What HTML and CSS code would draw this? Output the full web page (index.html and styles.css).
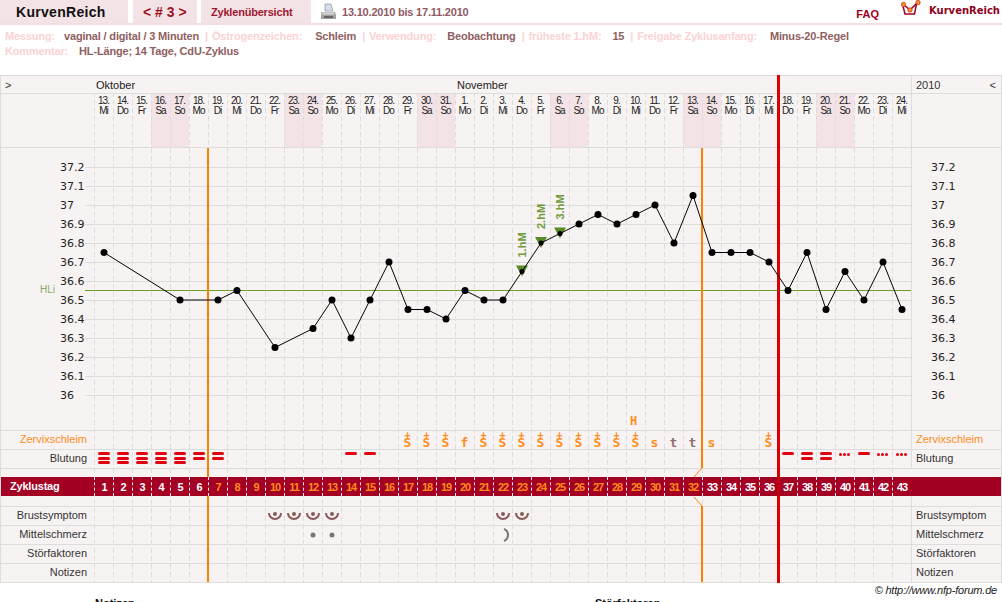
FILE: index.html
```html
<!DOCTYPE html>
<html lang="de">
<head>
    <meta charset="UTF-8">
    <title>KurvenReich</title>
    <link rel="stylesheet" href="styles.css">
</head>
<body>
    <header class="topbar">
        <div class="tab tab-brand">KurvenReich</div>
        <div class="tab tab-cycle">&lt; # 3 &gt;</div>
        <div class="tab tab-overview">Zyklenübersicht</div>
        <svg class="printer" width="16" height="18" viewBox="0 0 16 18">
            <path d="M5 1h6l2 7H5z" fill="#d5dde6" stroke="#8a949e" stroke-width="0.7"/>
            <path d="M1 9h14l1 3v4H1V12z" fill="#a3a3a3"/>
            <path d="M2 9.5h12l.5 2h-13z" fill="#d8d8d8"/>
            <rect x="4" y="13" width="9" height="2" fill="#666"/>
        </svg>
        <div class="date-range">13.10.2010 bis 17.11.2010</div>
        <a class="faq">FAQ</a>
        <svg class="logo-icon" width="20" height="17" viewBox="0 0 20 17">
            <path d="M2 6l2 8h9.500l2-10" fill="none" stroke="#a00020" stroke-width="1.500"/>
            <path d="M2 4l7 6 8-8" fill="none" stroke="#a00020" stroke-width="1.500"/>
            <circle cx="2.500" cy="4.500" r="2.200" fill="#f39a1e" stroke="#c8202a" stroke-width="0.700"/>
            <circle cx="9" cy="10" r="2.200" fill="#f39a1e" stroke="#c8202a" stroke-width="0.700"/>
            <circle cx="17" cy="2.500" r="2.200" fill="#f39a1e" stroke="#c8202a" stroke-width="0.700"/>
        </svg>
        <div class="logo-text">KurvenReich</div>
    </header>

    <section class="meta">
        <p>
            <span class="meta-label">Messung:</span>
            <span class="meta-value meta-value-tight">vaginal / digital / 3 Minuten</span>
            <span class="meta-sep">|</span>
            <span class="meta-label">Östrogenzeichen:</span>
            <span class="meta-value meta-value-loose">Schleim</span>
            <span class="meta-sep">|</span>
            <span class="meta-label">Verwendung:</span>
            <span class="meta-value">Beobachtung</span>
            <span class="meta-sep">|</span>
            <span class="meta-label">früheste 1.hM:</span>
            <span class="meta-value">15</span>
            <span class="meta-sep">|</span>
            <span class="meta-label">Freigabe Zyklusanfang:</span>
            <span class="meta-value meta-value-loose">Minus-20-Regel</span>
        </p>
        <p>
            <span class="meta-label">Kommentar:</span>
            <span class="meta-value">HL-Länge; 14 Tage, CdU-Zyklus</span>
        </p>
    </section>

    <main class="chart">
        <div class="row row-month">
            <div class="row-label toggle-left">&gt;</div>
            <div class="months">
                <span class="month month-oct">Oktober</span>
                <span class="month">November</span>
            </div>
            <div class="row-side year"><span>2010</span><span>&lt;</span></div>
        </div>
        <div class="row row-dates">
            <div class="row-label"></div>
            <div class="days" id="row-dates"></div>
            <div class="row-side"></div>
        </div>
        <div class="row row-plot">
            <div class="row-label"></div>
            <div class="days"></div>
            <div class="row-side"></div>
        </div>
        <div class="row">
            <div class="row-label label-mucus">Zervixschleim</div>
            <div class="days" id="row-mucus"></div>
            <div class="row-side label-mucus">Zervixschleim</div>
        </div>
        <div class="row">
            <div class="row-label">Blutung</div>
            <div class="days" id="row-bleeding"></div>
            <div class="row-side">Blutung</div>
        </div>
        <div class="row-gap"></div>
        <div class="row row-cycle">
            <div class="row-label">Zyklustag</div>
            <div class="days" id="row-cycle"></div>
            <div class="row-side"></div>
        </div>
        <div class="row row-gap-low">
            <div class="row-label"></div>
            <div class="days"></div>
            <div class="row-side"></div>
        </div>
        <div class="row">
            <div class="row-label">Brustsymptom</div>
            <div class="days" id="row-breast"></div>
            <div class="row-side">Brustsymptom</div>
        </div>
        <div class="row">
            <div class="row-label">Mittelschmerz</div>
            <div class="days" id="row-pain"></div>
            <div class="row-side">Mittelschmerz</div>
        </div>
        <div class="row">
            <div class="row-label">Störfaktoren</div>
            <div class="days"></div>
            <div class="row-side">Störfaktoren</div>
        </div>
        <div class="row">
            <div class="row-label">Notizen</div>
            <div class="days"></div>
            <div class="row-side">Notizen</div>
        </div>
        <svg class="overlay overlay-grid" id="overlay-grid" width="1002" height="508" viewBox="0 75 1002 508"></svg>
        <svg class="overlay overlay-curve" id="overlay-curve" width="1002" height="508" viewBox="0 75 1002 508"></svg>
    </main>

    <div class="copyright">© http://www.nfp-forum.de</div>
    <div class="notes">
        <h3>Notizen</h3>
        <h3>Störfaktoren</h3>
    </div>

    <script src="script.js"></script>
</body>
</html>
```

FILE: styles.css
```css
html, body {
    margin: 0;
    height: 602px;
    overflow: hidden;
    background: #fff;
}

body {
    font-family: "Liberation Sans", Arial, sans-serif;
    font-size: 11px;
    color: #333;
}

.topbar {
    display: flex;
    align-items: center;
    height: 23px;
    border-bottom: 2px solid #f3dfe2;
}

.tab {
    display: flex;
    align-items: center;
    align-self: stretch;
    background-color: #f3e3e6;
    font-weight: bold;
}

.tab-brand {
    width: 112px;
    padding-left: 16px;
    margin-right: 5px;
    font-size: 14px;
    letter-spacing: 0.3px;
    color: #111;
}

.tab-cycle {
    width: 54px;
    padding-left: 10px;
    margin-right: 4px;
    font-size: 14px;
    color: #a01025;
}

.tab-overview {
    width: 100px;
    padding-left: 10px;
    margin-right: 9px;
    letter-spacing: -0.2px;
    color: #a01830;
}

.date-range {
    margin-left: 6px;
    font-weight: bold;
    letter-spacing: -0.2px;
    color: #8f5a63;
}

.faq {
    margin-left: auto;
    margin-top: 4px;
    font-weight: bold;
    color: #a00020;
}

.logo-icon {
    margin-left: 22px;
    margin-bottom: 6px;
}

.logo-text {
    margin-left: 8px;
    margin-right: 2px;
    margin-bottom: 2px;
    font-family: "DejaVu Sans", sans-serif;
    font-size: 10px;
    font-weight: bold;
    color: #900020;
}

.meta {
    height: 50px;
    padding: 4px 0 0 5px;
    box-sizing: border-box;
    font-weight: bold;
    letter-spacing: -0.17px;
    color: #8f6060;
}

.meta p {
    display: flex;
    margin: 0;
    height: 15px;
    line-height: 15px;
    white-space: nowrap;
}

.meta-label,
.meta-sep {
    color: #fbd3d3;
}

.meta-sep {
    margin: 0 4px 0 6px;
}

.meta-value {
    margin-left: 11px;
}

.meta-value-tight {
    margin-left: 9px;
}

.meta-value-loose {
    margin-left: 13px;
}

.chart {
    position: relative;
    background-color: #f8f3f3;
    border-top: 1px solid #ddd;
}

.row {
    display: grid;
    grid-template-columns: 93px 817px 1fr;
    height: 19px;
    box-sizing: border-box;
    border: solid #ddd;
    border-width: 0 1px 1px;
}

.row-label {
    padding-right: 7px;
    line-height: 16px;
    text-align: right;
}

.row-side {
    padding-left: 4px;
    line-height: 16px;
    border-left: 1px solid #ddd;
}

.label-mucus {
    color: #ff8c1a;
}

.days {
    display: flex;
}

.day {
    display: flex;
    flex: 0 0 19px;
    flex-direction: column;
    align-items: center;
    box-sizing: border-box;
}

.row-month {
    height: 18px;
}

.row-month .row-label,
.row-month .row-side {
    line-height: 18px;
}

.toggle-left {
    padding: 0 0 0 4px;
    text-align: left;
}

.months {
    display: flex;
    line-height: 18px;
    color: #222;
}

.month {
    padding-left: 2px;
}

.month-oct {
    width: 359px;
}

.year {
    display: flex;
    justify-content: space-between;
    padding-right: 5px;
}

.row-dates {
    height: 54px;
}

.date {
    padding-top: 2px;
    font-size: 10px;
    line-height: 10px;
    letter-spacing: -1px;
    text-align: center;
    color: #222;
}

.weekend {
    background-color: #f3e3e6;
}

.row-plot {
    height: 283px;
}

.row-gap {
    height: 8px;
    border: solid #ddd;
    border-width: 0 1px;
}

.row-cycle {
    position: relative;
    z-index: 2;
    background-color: #a30023;
    background-clip: padding-box;
    border-bottom: 0;
    color: #fff;
    font-weight: bold;
}

.row-cycle .row-label {
    padding: 0 0 0 9px;
    line-height: 19px;
    letter-spacing: -0.2px;
    text-align: left;
}

.row-cycle .row-side {
    border-left: 0;
}

.cycle-day {
    justify-content: center;
    border-left: 1px dashed #f8f3f3;
    letter-spacing: -1px;
}

.cycle-day-fertile {
    color: #ff8c1a;
}

.row-gap-low {
    height: 11px;
}

.mucus {
    font-family: "DejaVu Sans Mono", monospace;
    font-size: 13px;
    font-weight: bold;
    line-height: 10px;
    color: #ff8c1a;
}

.mucus-plus {
    font-size: 10px;
    line-height: 7px;
}

.mucus-single {
    padding-top: 7px;
}

.mucus-dry {
    color: #8f6f6f;
}

.bleeding {
    gap: 1.5px;
    padding-top: 2px;
}

.bleed-bar {
    display: block;
    width: 12px;
    height: 3px;
    border-radius: 2px;
    background-color: #e00010;
}

.bleed-dots {
    display: flex;
    gap: 1px;
    padding-top: 1px;
}

.bleed-dot {
    width: 3px;
    height: 3px;
    border-radius: 50%;
    background-color: #e00010;
}

.symbol {
    justify-content: center;
}

.overlay {
    position: absolute;
    top: -1px;
    left: 0;
    pointer-events: none;
}

.overlay-grid {
    z-index: 1;
}

.overlay-curve {
    z-index: 3;
}

.axis-label {
    font-family: "DejaVu Sans", sans-serif;
    font-size: 11px;
    fill: #222;
}

.hl-label {
    font-size: 10px;
    fill: #86a868;
}

.hm-label {
    font-size: 11px;
    font-weight: bold;
    fill: #6f9a3c;
}

.peak-label {
    font-family: "DejaVu Sans Mono", monospace;
    font-size: 12px;
    font-weight: bold;
    fill: #ff8c1a;
}

.copyright {
    padding: 1px 5px 1px 0;
    text-align: right;
    font-style: italic;
    letter-spacing: -0.2px;
    color: #222;
}

.notes {
    display: grid;
    grid-template-columns: 500px 1fr;
    padding-left: 95px;
}

.notes h3 {
    margin: 0;
    font-size: 11px;
    color: #111;
}
```

FILE: script.js
```js
const dayCount = 43;
const weekdays = ['Mi', 'Do', 'Fr', 'Sa', 'So', 'Mo', 'Di'];

// temperature per cycle day, missing days are left out
const temps = {
    1: 36.75, 5: 36.5, 7: 36.5, 8: 36.55, 10: 36.25, 12: 36.35, 13: 36.5, 14: 36.3,
    15: 36.5, 16: 36.7, 17: 36.45, 18: 36.45, 19: 36.4, 20: 36.55, 21: 36.5, 22: 36.5,
    23: 36.65, 24: 36.8, 25: 36.85, 26: 36.9, 27: 36.95, 28: 36.9, 29: 36.95, 30: 37,
    31: 36.8, 32: 37.05, 33: 36.75, 34: 36.75, 35: 36.75, 36: 36.7, 37: 36.55, 38: 36.75,
    39: 36.45, 40: 36.65, 41: 36.5, 42: 36.7, 43: 36.45
};

const mucus = {
    17: 'S+', 18: 'S+', 19: 'S+', 20: 'f', 21: 'S+', 22: 'S+', 23: 'S+', 24: 'S+', 25: 'S+',
    26: 'S+', 27: 'S+', 28: 'S+', 29: 'S+', 30: 's', 31: 't', 32: 't', 33: 's', 36: 'S+'
};

// number of bars, 0 stands for spotting dots
const bleeding = {
    1: 3, 2: 3, 3: 3, 4: 3, 5: 3, 6: 2, 7: 2, 14: 1, 15: 1,
    37: 1, 38: 2, 39: 2, 40: 0, 41: 1, 42: 0, 43: 0
};

const marks = { 23: '1.hM', 24: '2.hM', 25: '3.hM' };

const breastIcon = '<svg width="14" height="12" viewBox="0 0 14 12"><path d="M1 3a6 6 0 0 0 12 0" fill="none" stroke="#8a5a5a" stroke-width="2"/><circle cx="7" cy="4" r="2" fill="#8a5a5a"/></svg>';
const dotIcon = '<svg width="6" height="6" viewBox="0 0 6 6"><circle cx="3" cy="3" r="2.500" fill="#777"/></svg>';
const arcIcon = '<svg class="arc" width="14" height="14" viewBox="0 0 14 14"><path d="M8 1a6.500 6.500 0 0 1 0 12" fill="none" stroke="#777" stroke-width="2"/></svg>';

function fillRow(id, render) {
    const row = document.getElementById(id);
    for (let day = 1; day <= dayCount; day++) {
        const cell = document.createElement('div');
        cell.classList.add('day');
        render(cell, day);
        row.appendChild(cell);
    }
}

function columnX(day) {
    return 104 + (day - 1) * 19;
}

function tempY(temp) {
    return 395 - (temp - 36) * 190;
}

function buildRows() {
    fillRow('row-dates', (cell, day) => {
        const date = day <= 19 ? day + 12 : day - 19;
        const weekday = weekdays[(day - 1) % 7];
        cell.classList.add('date');
        if (weekday === 'Sa' || weekday === 'So') cell.classList.add('weekend');
        cell.innerHTML = `${date}.<br>${weekday}`;
    });

    fillRow('row-mucus', (cell, day) => {
        const value = mucus[day];
        cell.classList.add('mucus');
        if (!value) return;
        if (value === 't') cell.classList.add('mucus-dry');
        if (value === 'S+') {
            cell.innerHTML = '<span class="mucus-plus">+</span><span>S</span>';
        } else {
            cell.classList.add('mucus-single');
            cell.textContent = value;
        }
    });

    fillRow('row-bleeding', (cell, day) => {
        const value = bleeding[day];
        cell.classList.add('bleeding');
        if (value === undefined) return;
        if (value === 0) {
            cell.innerHTML = '<span class="bleed-dots"><i class="bleed-dot"></i><i class="bleed-dot"></i><i class="bleed-dot"></i></span>';
            return;
        }
        cell.innerHTML = '<span class="bleed-bar"></span>'.repeat(value);
    });

    fillRow('row-cycle', (cell, day) => {
        cell.classList.add('cycle-day');
        if (day >= 7 && day <= 32) cell.classList.add('cycle-day-fertile');
        cell.textContent = day;
    });

    fillRow('row-breast', (cell, day) => {
        cell.classList.add('symbol');
        if ((day >= 10 && day <= 13) || day === 22 || day === 23) cell.innerHTML = breastIcon;
    });

    fillRow('row-pain', (cell, day) => {
        cell.classList.add('symbol');
        if (day === 12 || day === 13) cell.innerHTML = dotIcon;
        if (day === 22) cell.innerHTML = arcIcon;
    });
}

function buildGrid() {
    let svg = '';
    for (let i = 0; i <= 12; i++) {
        const y = 167.5 + i * 19;
        svg += `<line x1="85" x2="911" y1="${y}" y2="${y}" stroke="#ddd"/>`;
        const label = String(Math.round((372 - i)) / 10);
        svg += `<text class="axis-label" x="60" y="${y + 3}">${label}</text>`;
        svg += `<text class="axis-label" x="931" y="${y + 3}">${label}</text>`;
    }
    for (let i = 0; i < dayCount; i++) {
        const x = 94.5 + i * 19;
        svg += `<line x1="${x}" x2="${x}" y1="94" y2="582" stroke="#ddd" stroke-dasharray="5 3" stroke-dashoffset="2"/>`;
    }
    svg += '<rect x="85" y="290" width="826" height="1" fill="#6a9e2a"/>';
    svg += '<text class="hl-label" x="40" y="293">HLi</text>';
    svg += '<text class="peak-label" x="630" y="425">H</text>';
    svg += '<path d="M208 148V582" stroke="#ff8000" stroke-width="2" fill="none"/>';
    svg += '<path d="M702 148V468M702 506V582" stroke="#ff8000" stroke-width="2" fill="none"/>';
    svg += '<path d="M702 468L694 477M694 497L702 506" stroke="#ff8000" fill="none"/>';
    document.getElementById('overlay-grid').innerHTML = svg;
}

function buildCurve() {
    const days = Object.keys(temps).map(Number);
    const points = days.map(day => `${columnX(day)},${tempY(temps[day])}`).join(' ');
    let svg = '';

    svg += '<rect x="777" y="75" width="3" height="508" fill="#d80000"/>';
    svg += '<rect x="777" y="477" width="3" height="19" fill="#c4000f"/>';

    Object.keys(marks).forEach(day => {
        const x = columnX(day);
        const y = tempY(temps[day]);
        svg += `<path d="M${x - 6} ${y - 6}h12l-6 11z" fill="#5a8a28"/>`;
        svg += `<text class="hm-label" x="${x + 4}" y="${y - 14}" transform="rotate(-90 ${x + 4} ${y - 14})">${marks[day]}</text>`;
    });

    svg += `<polyline points="${points}" fill="none" stroke="#000"/>`;
    days.forEach(day => {
        const radius = marks[day] ? 2.5 : 3.5;
        svg += `<circle cx="${columnX(day)}" cy="${tempY(temps[day])}" r="${radius}" fill="#000"/>`;
    });
    document.getElementById('overlay-curve').innerHTML = svg;
}

buildRows();
buildGrid();
buildCurve();
```
